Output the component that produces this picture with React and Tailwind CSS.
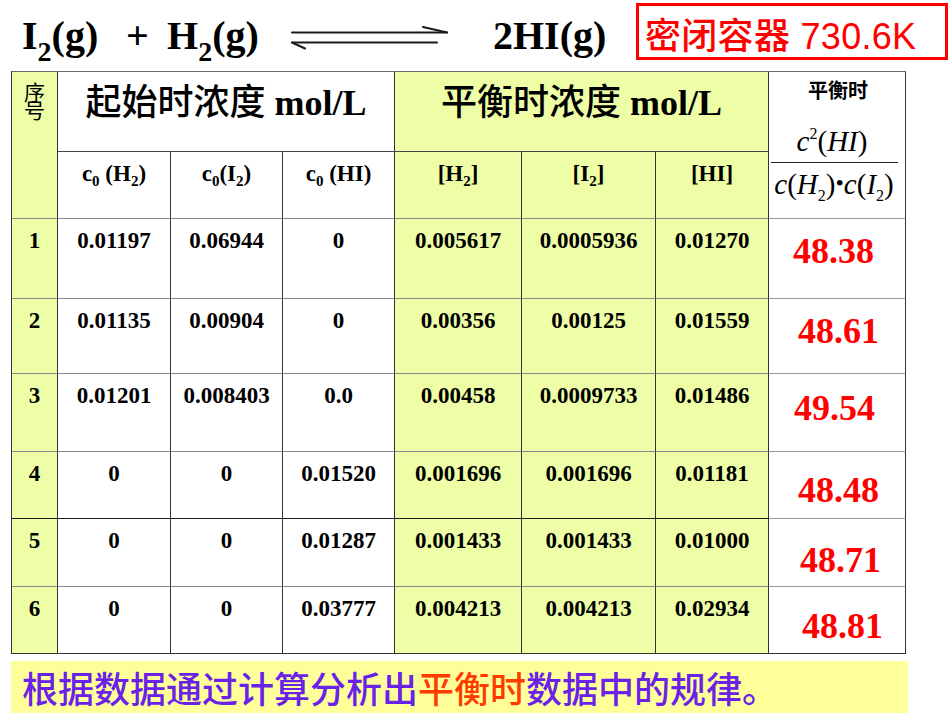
import React from "react";

const SERIF = "font-['Liberation_Serif','Noto_Sans_CJK_SC',serif]";
const SANS = "font-['Noto_Sans_CJK_SC','Liberation_Sans',sans-serif]";
const YG = "bg-[#edfea6]";

const rows = [
  { n: "1", a: "0.01197", b: "0.06944", c: "0", d: "0.005617", e: "0.0005936", f: "0.01270", k: "48.38", pos: "pt-[14px] pl-[24px]", bb: "border-b-[#888]" },
  { n: "2", a: "0.01135", b: "0.00904", c: "0", d: "0.00356", e: "0.00125", f: "0.01559", k: "48.61", pos: "pt-[14px] pl-[29px]", bb: "border-b-[#888]" },
  { n: "3", a: "0.01201", b: "0.008403", c: "0.0", d: "0.00458", e: "0.0009733", f: "0.01486", k: "49.54", pos: "pt-[16px] pl-[25px]", bb: "border-b-[#888]" },
  { n: "4", a: "0", b: "0", c: "0.01520", d: "0.001696", e: "0.001696", f: "0.01181", k: "48.48", pos: "pt-[20px] pl-[29px]", bb: "border-b-[#1a1a1a]" },
  { n: "5", a: "0", b: "0", c: "0.01287", d: "0.001433", e: "0.001433", f: "0.01000", k: "48.71", pos: "pt-[23px] pl-[31px]", bb: "border-b-[#888]" },
  { n: "6", a: "0", b: "0", c: "0.03777", d: "0.004213", e: "0.004213", f: "0.02934", k: "48.81", pos: "pt-[21px] pl-[33px]", bb: "border-b-[#333]" },
];

function Cell({ className = "", children }) {
  return (
    <div className={`border-r border-b border-r-[#333] ${className}`}>{children}</div>
  );
}

function Sub({ children }) {
  return <span className="text-[15px] leading-none align-[-5px]">{children}</span>;
}

function DataText({ children }) {
  return (
    <div className={`${SERIF} font-bold text-[23px] leading-[23px] text-black text-center pt-[10px]`}>
      {children}
    </div>
  );
}

export default function App() {
  return (
    <div className="w-[950px] h-[713px] bg-white overflow-hidden">
      {/* Title row */}
      <div className={`flex items-start h-[71px] ${SERIF} font-bold text-black`}>
        <div className="ml-[22px] w-[104px] pt-[16px] text-[40px] leading-[40px] whitespace-nowrap">
          I<span className="text-[28px] leading-none align-[-12px]">2</span>(g)
        </div>
        <div className="w-[41px] pt-[16px] text-[40px] leading-[40px]">+</div>
        <div className="w-[123px] pt-[16px] text-[40px] leading-[40px] whitespace-nowrap">
          H<span className="text-[28px] leading-none align-[-12px]">2</span>(g)
        </div>
        <svg width="158" height="71" viewBox="0 0 158 71" className="shrink-0">
          <g stroke="#1a1a1a" strokeWidth="2" fill="none" strokeLinecap="round">
            <path d="M2 32.5 H157" />
            <path d="M133 27 L157 32.5" />
            <path d="M2 42.5 H147" />
            <path d="M2 42.5 L15 48.5" />
          </g>
        </svg>
        <div className="ml-[45px] w-[143px] pt-[16px] text-[40px] leading-[40px] whitespace-nowrap">
          2HI(g)
        </div>
        <div className="mt-[3px] w-[312px] h-[57px] border-[3px] border-[#ff0000] pl-[6px] pt-[9px] font-['Liberation_Sans','Noto_Sans_CJK_SC',sans-serif] font-medium text-[36px] leading-[36px] text-[#ff0000] whitespace-nowrap tracking-[0.3px]">
          <span className="font-['Noto_Sans_CJK_SC',sans-serif]">密闭容器</span> 730.6K
        </div>
      </div>

      {/* Table */}
      <div className="ml-[11px] w-[895px] border-l border-t border-l-[#333] border-t-[#666] grid grid-cols-[46px_113px_112px_112px_127px_134px_113px_137px] grid-rows-[80px_67px_80px_75px_78px_67px_68px_67px]">
        {/* header row 1 */}
        <Cell className={`row-span-2 ${YG} border-b-[#888]`}>
          <div className="flex justify-center pt-[10px]">
            <div className={`${SANS} [writing-mode:vertical-rl] text-[21px] leading-[24px] tracking-[-3px] text-black`}>
              序号
            </div>
          </div>
        </Cell>
        <Cell className="col-span-3 bg-white border-b-[#444]">
          <div className="text-center pt-[9px] text-[36px] leading-[36px] text-black whitespace-nowrap">
            <span className={`${SANS} font-medium`}>起始时浓度</span>
            <span className={`${SERIF} font-bold`}> mol/L</span>
          </div>
        </Cell>
        <Cell className={`col-span-3 ${YG} border-b-[#444]`}>
          <div className="text-center pt-[9px] text-[36px] leading-[36px] text-black whitespace-nowrap">
            <span className={`${SANS} font-medium`}>平衡时浓度</span>
            <span className={`${SERIF} font-bold`}> mol/L</span>
          </div>
        </Cell>
        <Cell className="row-span-2 bg-white border-b-[#999]">
          <div className="flex flex-col items-center">
            <div className={`${SANS} font-bold text-[20px] leading-[20px] text-black pt-[8px] pl-[2px]`}>平衡时</div>
            <div className={`${SERIF} text-[29px] leading-[28px] text-black mt-[26px] whitespace-nowrap pr-[10px]`}>
              <i>c</i>
              <span className="text-[16px] leading-none align-[12px]">2</span>
              (<i>HI</i>)
            </div>
            <div className="mt-[7px] w-[127px] h-[1px] bg-[#222] ml-[-6px]" />
            <div className={`${SERIF} text-[29px] leading-[28px] text-black mt-[7px] whitespace-nowrap ml-[-6px]`}>
              <i>c</i>(<i>H</i>
              <span className="text-[16px] leading-none align-[-7px]">2</span>)
              <span className="text-[24px] leading-none align-[3px]">•</span>
              <i>c</i>(<i>I</i>
              <span className="text-[16px] leading-none align-[-7px]">2</span>)
            </div>
          </div>
        </Cell>

        {/* header row 2 */}
        <Cell className="bg-white border-b-[#888]">
          <DataText>c<Sub>0</Sub> (H<Sub>2</Sub>)</DataText>
        </Cell>
        <Cell className="bg-white border-b-[#888]">
          <DataText>c<Sub>0</Sub>(I<Sub>2</Sub>)</DataText>
        </Cell>
        <Cell className="bg-white border-b-[#888]">
          <DataText>c<Sub>0</Sub> (HI)</DataText>
        </Cell>
        <Cell className={`${YG} border-b-[#888]`}>
          <DataText>[H<Sub>2</Sub>]</DataText>
        </Cell>
        <Cell className={`${YG} border-b-[#888]`}>
          <DataText>[I<Sub>2</Sub>]</DataText>
        </Cell>
        <Cell className={`${YG} border-b-[#888]`}>
          <DataText>[HI]</DataText>
        </Cell>

        {rows.map((r) => (
          <React.Fragment key={r.n}>
            <Cell className={`${YG} ${r.bb}`}><DataText>{r.n}</DataText></Cell>
            <Cell className={`bg-white ${r.bb}`}><DataText>{r.a}</DataText></Cell>
            <Cell className={`bg-white ${r.bb}`}><DataText>{r.b}</DataText></Cell>
            <Cell className={`bg-white ${r.bb}`}><DataText>{r.c}</DataText></Cell>
            <Cell className={`${YG} ${r.bb}`}><DataText>{r.d}</DataText></Cell>
            <Cell className={`${YG} ${r.bb}`}><DataText>{r.e}</DataText></Cell>
            <Cell className={`${YG} ${r.bb}`}><DataText>{r.f}</DataText></Cell>
            <Cell className={`bg-white ${r.n === "6" ? "border-b-[#333]" : "border-b-[#999]"}`}>
              <div className={`${SERIF} font-bold text-[36px] leading-[36px] text-[#ff0000] ${r.pos}`}>
                {r.k}
              </div>
            </Cell>
          </React.Fragment>
        ))}
      </div>

      {/* Bottom banner */}
      <div className={`mt-[7px] ml-[11px] w-[897px] h-[52px] bg-[#ffff99] pl-[11px] pt-[8px] ${SANS} font-medium text-[36px] leading-[36px] whitespace-nowrap`}>
        <span className="text-[#6a22e8]">根据数据通过计算分析出</span>
        <span className="text-[#ff3c00]">平衡时</span>
        <span className="text-[#6a22e8]">数据中的规律。</span>
      </div>
    </div>
  );
}
